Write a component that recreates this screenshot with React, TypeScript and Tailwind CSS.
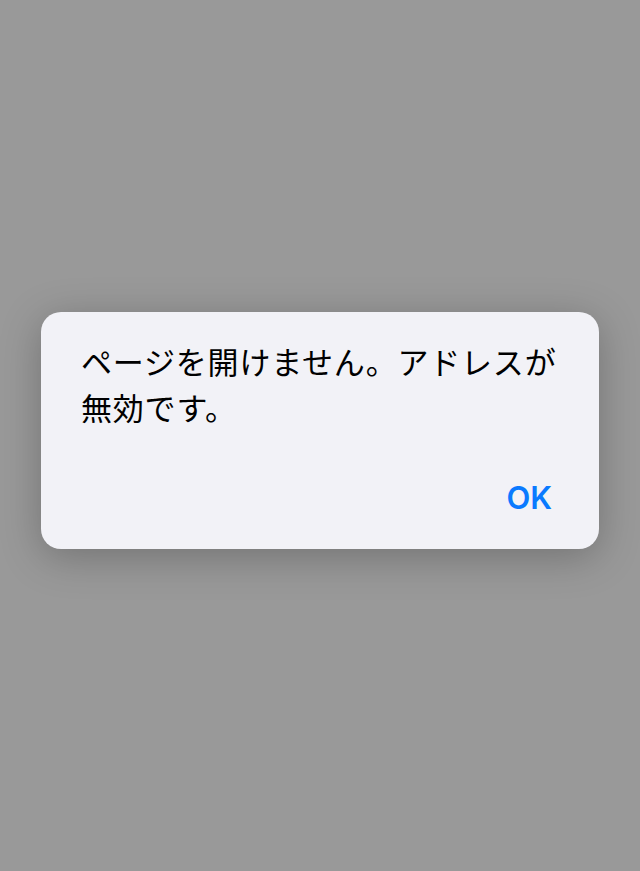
import React from "react";

export default function App() {
  return (
    <div className="w-[640px] h-[871px] bg-[#999999] flex items-start justify-center pt-[312px]" style={{ fontFamily: '"Noto Sans CJK JP", "Noto Sans", sans-serif' }}>
      <div className="w-[558px] h-[237px] rounded-[20px] bg-[#f2f2f7] shadow-[0_8px_40px_rgba(0,0,0,0.25)] flex flex-col pl-[40px] pr-[30px] pt-[26px]">
        <p className="text-[31px] leading-[46px] text-black tracking-[0.8px]">ページを開けません。アドレスが<br />無効です。</p>
        <div className="flex justify-end mt-[52px] pr-[17px]">
          <span className="text-[31px] font-semibold text-[#0a7aff] leading-none" style={{ fontFamily: '"Inter", "Liberation Sans", sans-serif' }}>OK</span>
        </div>
      </div>
    </div>
  );
}
